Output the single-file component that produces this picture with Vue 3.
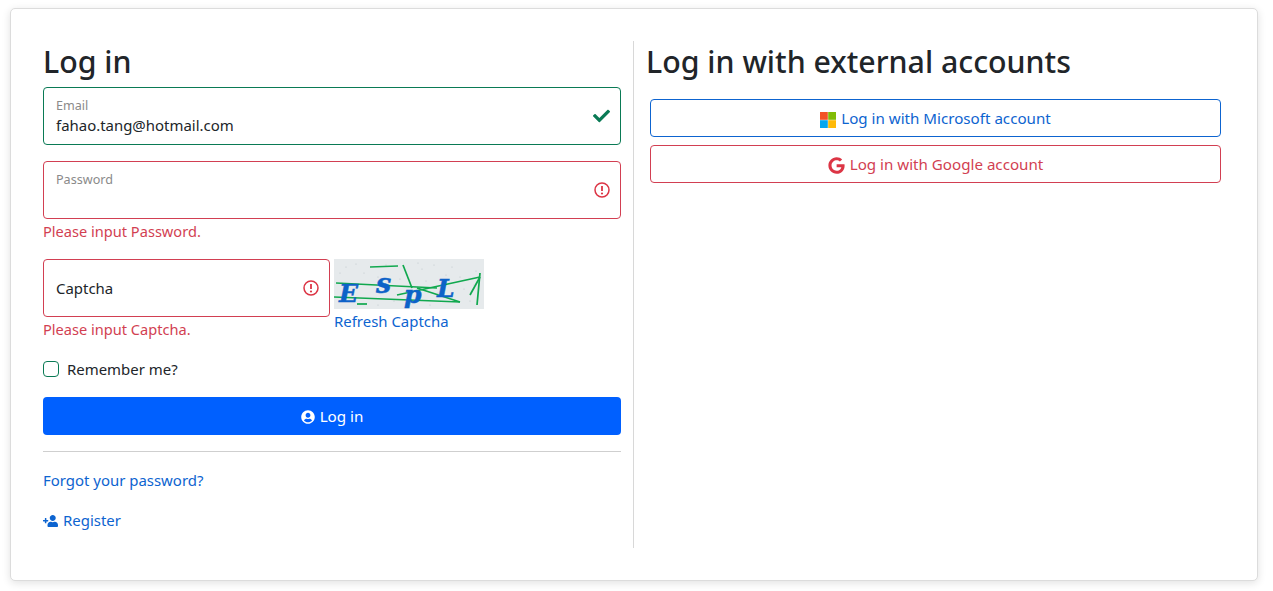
<script setup>
const speckles = [
  [12, 8], [30, 14], [52, 6], [66, 20], [88, 10], [104, 34], [118, 8], [136, 42], [20, 40], [44, 46], [74, 44], [96, 46], [126, 18], [142, 12], [8, 24],
  [22, 5], [44, 18], [92, 22], [112, 16], [130, 30], [60, 42], [6, 14], [84, 4], [100, 6], [140, 26]
];
</script>

<template>
  <div class="page">
    <main class="card">
      <section class="col col--left">
        <h1 class="title">Log in</h1>

        <div class="field field--valid">
          <label class="field__label">Email</label>
          <div class="field__value">fahao.tang@hotmail.com</div>
          <svg class="field__icon" viewBox="0 0 512 512" width="17" height="17">
            <path fill="#0a7a55" d="M173.898 439.404l-166.4-166.4c-9.997-9.997-9.997-26.206 0-36.204l36.203-36.204c9.997-9.998 26.207-9.998 36.204 0L192 312.69 432.095 72.596c9.997-9.997 26.207-9.997 36.204 0l36.203 36.204c9.997 9.997 9.997 26.206 0 36.204l-294.4 294.401c-9.998 9.997-26.207 9.997-36.204-.001z" />
          </svg>
        </div>

        <div class="field field--invalid">
          <label class="field__label">Password</label>
          <svg class="field__icon" viewBox="0 0 16 16" width="16" height="16">
            <circle cx="8" cy="8" r="7" fill="none" stroke="#dc3545" stroke-width="1.5" />
            <path d="M8 4 V9" stroke="#dc3545" stroke-width="1.8" />
            <circle cx="8" cy="11.5" r="1.1" fill="#dc3545" />
          </svg>
        </div>
        <div class="feedback">Please input Password.</div>

        <div class="captcha">
          <div class="captcha__input">
            <div class="field field--invalid field--plain">
              <div class="field__plain">Captcha</div>
              <svg class="field__icon" viewBox="0 0 16 16" width="16" height="16">
                <circle cx="8" cy="8" r="7" fill="none" stroke="#dc3545" stroke-width="1.5" />
                <path d="M8 4 V9" stroke="#dc3545" stroke-width="1.8" />
                <circle cx="8" cy="11.5" r="1.1" fill="#dc3545" />
              </svg>
            </div>
            <div class="feedback">Please input Captcha.</div>
          </div>
          <div class="captcha__side">
            <svg class="captcha__img" viewBox="0 0 150 50" width="150" height="50">
              <rect width="150" height="50" fill="#e6eaec" />
              <circle v-for="(s, i) in speckles" :key="i" :cx="s[0]" :cy="s[1]" r="0.6" fill="#c0c7ca" />
              <g stroke="#10a84e" stroke-width="1.7" fill="none">
                <path d="M36 8 L64 7" />
                <path d="M2 24 L103 29" />
                <path d="M83 29 L126 43" />
                <path d="M63 36 L146 18" />
                <path d="M0 38 L126 43" />
                <path d="M69 6 L78 29" />
                <path d="M146 14 L143 46" />
                <path d="M146 18 L136 36" />
                <path d="M23 45 H33" />
              </g>
              <g class="captcha__letters">
                <text x="5" y="43" font-size="25">E</text>
                <text x="42" y="34" font-size="27">s</text>
                <text x="70" y="44" font-size="25">p</text>
                <text x="103" y="38" font-size="25">L</text>
              </g>
            </svg>
            <a class="link">Refresh Captcha</a>
          </div>
        </div>

        <label class="remember">
          <span class="remember__box"></span>
          <span>Remember me?</span>
        </label>

        <button class="btn-primary">
          <svg class="btn-primary__icon" viewBox="0 0 496 512" width="14" height="14">
            <path fill="#fff" d="M248 8C111 8 0 119 0 256s111 248 248 248 248-111 248-248S385 8 248 8zm0 96c48.6 0 88 39.4 88 88s-39.4 88-88 88-88-39.4-88-88 39.4-88 88-88zm0 344c-58.7 0-111.3-26.6-146.5-68.2 18.8-35.4 55.6-59.8 98.5-59.8 2.4 0 4.8.4 7.1 1.1 13 4.2 26.6 6.9 40.9 6.9 14.3 0 28-2.7 40.9-6.9 2.3-.7 4.7-1.1 7.1-1.1 42.9 0 79.7 24.4 98.5 59.8C359.3 421.4 306.7 448 248 448z" />
          </svg>
          <span>Log in</span>
        </button>

        <hr class="rule" />

        <a class="link link--block">Forgot your password?</a>
        <a class="link link--register">
          <svg class="link__icon" viewBox="0 0 640 512" width="15" height="12">
            <path fill="#0d64d0" transform="matrix(-1 0 0 1 640 0)" d="M624 208h-64v-64c0-8.8-7.2-16-16-16h-32c-8.8 0-16 7.2-16 16v64h-64c-8.8 0-16 7.2-16 16v32c0 8.8 7.2 16 16 16h64v64c0 8.8 7.2 16 16 16h32c8.8 0 16-7.2 16-16v-64h64c8.8 0 16-7.2 16-16v-32c0-8.8-7.2-16-16-16zm-400 48c70.7 0 128-57.3 128-128S294.7 0 224 0 96 57.3 96 128s57.3 128 128 128zm89.6 32h-16.7c-22.2 10.2-46.9 16-72.9 16s-50.6-5.8-72.9-16h-16.7C60.2 288 0 348.2 0 422.4V464c0 26.5 21.5 48 48 48h352c26.5 0 48-21.5 48-48v-41.6c0-74.2-60.2-134.4-134.4-134.4z" />
          </svg>
          <span>Register</span>
        </a>
      </section>

      <section class="col col--right">
        <h1 class="title">Log in with external accounts</h1>
        <div class="providers">
          <button class="btn-outline btn-outline--blue">
            <svg class="btn-outline__icon" viewBox="0 0 16 16" width="16" height="16">
              <rect width="7.8" height="7.8" fill="#f35325" />
              <rect x="8.2" width="7.8" height="7.8" fill="#81bc06" />
              <rect y="8.2" width="7.8" height="7.8" fill="#05a6f0" />
              <rect x="8.2" y="8.2" width="7.8" height="7.8" fill="#ffba08" />
            </svg>
            <span>Log in with Microsoft account</span>
          </button>
          <button class="btn-outline btn-outline--red">
            <svg class="btn-outline__icon" viewBox="0 0 488 512" width="17" height="17">
              <path fill="#dc3545" d="M488 261.8C488 403.3 391.1 504 248 504 110.8 504 0 393.2 0 256S110.8 8 248 8c66.8 0 123 24.5 166.3 64.9l-67.5 64.9C258.5 52.6 94.3 116.6 94.3 256c0 86.5 69.1 156.6 153.7 156.6 98.2 0 135-70.4 140.8-106.9H248v-85.3h236.1c2.3 12.7 3.9 24.9 3.9 41.4z" />
            </svg>
            <span>Log in with Google account</span>
          </button>
        </div>
      </section>
    </main>
  </div>
</template>

<style>
html, body {
  margin: 0;
  background: #fff;
}
</style>

<style scoped>
.page {
  padding: 8px 15px 10px 10px;
  font-family: "Noto Sans", "Open Sans", sans-serif;
  font-size: 14.95px;
  line-height: 24px;
  color: #212529;
}

.card {
  display: grid;
  grid-template-columns: 624px 1fr;
  height: 573px;
  box-sizing: border-box;
  padding: 32px;
  background: #fff;
  border: 1px solid #dcdcdc;
  border-radius: 5px;
  box-shadow: 0 2px 8px rgba(0, 0, 0, 0.12);
}

.col--left {
  padding-right: 12px;
  border-right: 1px solid #d8d8d8;
  width: 591px;
  box-sizing: border-box;
}

.col--right {
  margin-left: -21px;
}

.title {
  margin: 0 0 6px;
  padding-top: 2px;
  font-size: 30.3px;
  font-weight: 500;
  line-height: 38px;
  color: #212529;
}

.field {
  position: relative;
  height: 58px;
  box-sizing: border-box;
  border: 1px solid;
  border-radius: 4px;
  padding: 9px 12px;
}

.field--valid {
  border-color: #0a7a55;
  margin-bottom: 16px;
}

.field--invalid {
  border-color: #d23f52;
}

.field--plain {
  display: flex;
  align-items: center;
}

.field__label {
  display: block;
  font-size: 12.6px;
  line-height: 18px;
  color: #8a8a8a;
}

.field__value {
  line-height: 22px;
  margin-top: -1px;
}

.field__icon {
  position: absolute;
  right: 10px;
  top: 50%;
  transform: translateY(-50%);
}

.feedback {
  margin-bottom: 16px;
  font-size: 14.6px;
  line-height: 24px;
  color: #d23f52;
}

.captcha {
  display: flex;
  gap: 4px;
}

.captcha__input {
  width: 287px;
  flex: none;
}

.captcha__side {
  display: flex;
  flex-direction: column;
}

.captcha__img {
  display: block;
}

.captcha__letters text {
  font-family: "DejaVu Serif", serif;
  font-weight: 700;
  font-style: italic;
  fill: #0d62c8;
  stroke: #0d62c8;
  stroke-width: 0.5;
}

.link {
  color: #0d64d0;
  text-decoration: none;
  line-height: 24px;
}

.link__icon {
  margin-top: 2px;
}

.remember {
  display: flex;
  align-items: center;
  gap: 8px;
  height: 24px;
  margin-bottom: 16px;
}

.remember__box {
  width: 14px;
  height: 14px;
  border: 1px solid #0a7a55;
  border-radius: 4px;
}

.btn-primary {
  display: flex;
  align-items: center;
  justify-content: center;
  gap: 5px;
  width: 100%;
  height: 38px;
  border: 0;
  border-radius: 4px;
  background: #0060ff;
  color: #fff;
  font: inherit;
  font-size: 15.2px;
}

.btn-primary__icon {
  margin-top: 2px;
}

.rule {
  margin: 16px 0;
  border: 0;
  border-top: 1px solid #cfcfcf;
}

.link--block {
  display: block;
  margin-bottom: 16px;
}

.link--register {
  display: flex;
  align-items: center;
  gap: 5px;
}

.providers {
  display: flex;
  flex-direction: column;
  gap: 8px;
  margin: 18px 0 0 4px;
  width: 571px;
}

.btn-outline {
  display: flex;
  align-items: center;
  justify-content: center;
  gap: 5px;
  height: 38px;
  background: #fff;
  border: 1px solid;
  border-radius: 4px;
  font: inherit;
  font-size: 15.15px;
}

.btn-outline__icon {
  margin-top: 3px;
}

.btn-outline--blue {
  border-color: #0d64d0;
  color: #0d64d0;
}

.btn-outline--red {
  border-color: #d23f52;
  color: #d23f52;
}
</style>
